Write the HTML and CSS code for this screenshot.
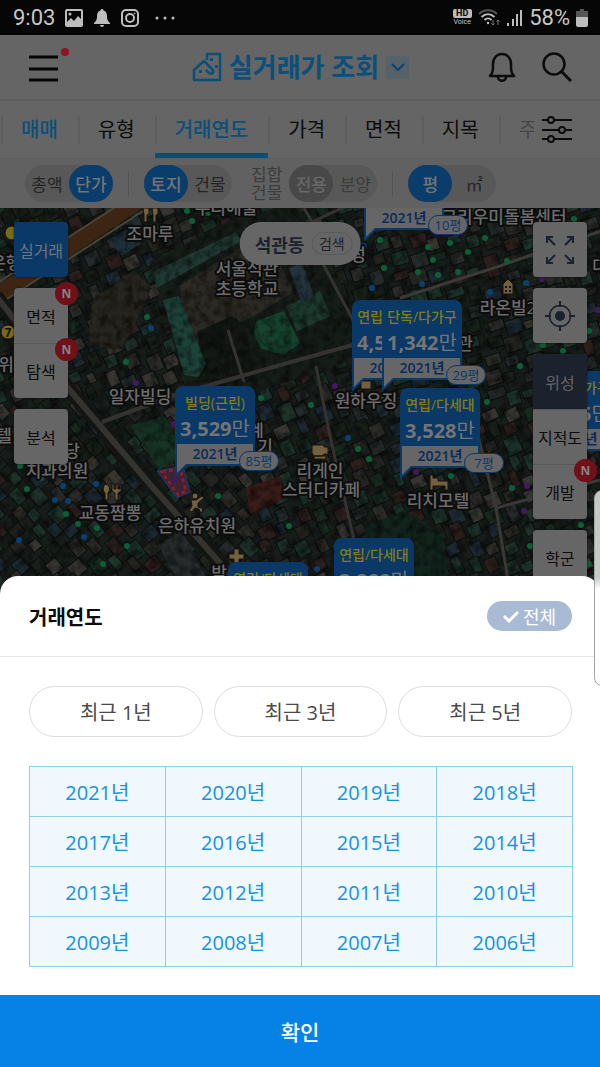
FILE: index.html
```html
<!DOCTYPE html>
<html lang="ko">
<head>
    <meta charset="UTF-8">
    <meta name="viewport" content="width=device-width, initial-scale=1.0">
    <title>실거래가 조회</title>
    <link rel="stylesheet" href="styles.css">
</head>
<body>
    <div class="status">
        <span class="clock">9:03</span>
        <svg width="18" height="18" viewBox="0 0 18 18"><rect x="1" y="1" width="16" height="16" rx="1" fill="none" stroke="#bdbdbd" stroke-width="2"/><path d="M2 13l4-4 3 3 4-5 4 4v6H2z" fill="#bdbdbd"/><circle cx="5" cy="5" r="1.5" fill="#bdbdbd"/></svg>
        <svg width="18" height="18" viewBox="0 0 18 18"><path d="M9 0c1 0 1.500.6 1.500 1.500C13 2.300 14 4.500 14 7c0 4 1 5 3 7v1H1v-1c2-2 3-3 3-7 0-2.500 1-4.700 3.500-5.500C7.500.6 8 0 9 0zM7 16h4c0 1.300-1 2-2 2s-2-.7-2-2z" fill="#bdbdbd"/></svg>
        <svg width="18" height="18" viewBox="0 0 18 18" fill="none" stroke="#bdbdbd" stroke-width="2"><rect x="1" y="1" width="16" height="16" rx="4"/><circle cx="9" cy="9" r="4"/><circle cx="13.500" cy="4.500" r=".5" stroke-width="1"/></svg>
        <svg class="more" width="20" height="4" viewBox="0 0 20 4" fill="#bdbdbd"><circle cx="2" cy="2" r="1.500"/><circle cx="10" cy="2" r="1.500"/><circle cx="18" cy="2" r="1.500"/></svg>
        <div class="status-right">
            <span class="hd"><b>HD</b><small>Voice</small></span>
            <svg width="23" height="18" viewBox="0 0 23 18" fill="none" stroke="#bdbdbd" stroke-width="2"><path d="M1 5c5-5 13-5 18 0" stroke="#555"/><path d="M3.500 8c4-3.600 9-3.600 13 0M6.500 11c2-2 5-2 7 0"/><circle cx="10" cy="14" r="1.200" fill="#bdbdbd" stroke="none"/><path d="M15 11v5m-1.500-1.500L15 16l1.500-1.500M20 16v-5m-1.500 1.500L20 11l1.500 1.500" stroke="#777" stroke-width="1"/></svg>
            <svg width="16" height="18" viewBox="0 0 16 18" fill="#bdbdbd"><path d="M0 14h2v3H0zM5 10h2v7H5zM9 5h2v12H9zM13 1h2v16h-2z"/></svg>
            <span class="clock">58%</span>
            <svg width="12" height="18" viewBox="0 0 12 18"><path d="M4 0h4v2h4v7H0V2h4z" fill="#555"/><path d="M0 8h12v8a2 2 0 0 1-2 2H2a2 2 0 0 1-2-2z" fill="#bdbdbd"/></svg>
        </div>
    </div>

    <header class="topbar">
        <button class="icon-btn menu" aria-label="메뉴">
            <svg width="40" height="38" viewBox="0 0 40 38"><path d="M0 11h29M0 23h29M0 34h29" stroke="#050505" stroke-width="3"/><circle cx="36" cy="6" r="4" fill="#8c1524"/></svg>
        </button>
        <button class="title">
            <svg width="30" height="30" viewBox="0 0 30 30" fill="none" stroke="#0b4f7b" stroke-width="2.500" stroke-linejoin="round"><path d="M15 8V2h13v26H2V18l10-9 8 8c3 3 0 6-3 4l-3-3"/><path d="M7 18h3v3H7zM18 6h3v3h-3zM23 13h3v3h-3z" fill="#0b4f7b" stroke="none"/></svg>
            <h1>실거래가 조회</h1>
            <span class="caret"><svg width="14" height="8" viewBox="0 0 14 8" fill="none" stroke="#0b4472" stroke-width="2"><path d="M1 1l6 6 6-6"/></svg></span>
        </button>
        <div class="actions">
            <button class="icon-btn" aria-label="알림">
                <svg width="28" height="30" viewBox="0 0 28 30" fill="none" stroke="#0c0c0c" stroke-width="2.500"><path d="M2 24c3-3 3-6 3-12 0-6 4-10 9-10s9 4 9 10c0 6 0 9 3 12z" stroke-linejoin="round"/><path d="M10 25c0 5 8 5 8 0"/></svg>
            </button>
            <button class="icon-btn" aria-label="찾기">
                <svg width="30" height="30" viewBox="0 0 30 30" fill="none" stroke="#0c0c0c" stroke-width="3"><circle cx="12" cy="12" r="10.500" stroke-width="2.500"/><path d="M19 19l10 10"/></svg>
            </button>
        </div>
    </header>

    <nav class="tabs">
        <a href="#" class="tab set">매매</a>
        <a href="#" class="tab">유형</a>
        <a href="#" class="tab set current">거래연도</a>
        <a href="#" class="tab">가격</a>
        <a href="#" class="tab">면적</a>
        <a href="#" class="tab">지목</a>
        <a href="#" class="tab cut">주</a>
        <button class="tune" aria-label="필터">
            <svg width="30" height="28" viewBox="0 0 30 28" fill="#656565" stroke="#0c0c0c" stroke-width="2"><path d="M0 4h30M0 14h30M0 23h30"/><circle cx="9" cy="4" r="3"/><circle cx="20" cy="14" r="3"/><circle cx="9" cy="23" r="3"/></svg>
        </button>
    </nav>

    <div class="filters">
        <div class="toggle"><button>총액</button><button class="on">단가</button></div>
        <i class="bar"></i>
        <div class="toggle"><button class="on">토지</button><button>건물</button></div>
        <span class="note">집합<br>건물</span>
        <div class="toggle off"><button class="on">전용</button><button>분양</button></div>
        <i class="bar"></i>
        <div class="toggle"><button class="on">평</button><button>㎡</button></div>
    </div>

    <main class="map">
        <svg class="aerial" viewBox="0 208 600 384" preserveAspectRatio="xMidYMin slice">
            <defs>
                <filter id="grain" x="0" y="0" width="100%" height="100%">
                    <feTurbulence type="fractalNoise" baseFrequency="0.120" numOctaves="3" seed="4"/>
                    <feColorMatrix values="0 0 0 0 0  0 0 0 0 0  0 0 0 0 0  2.400 0 0 0 -0.900"/>
                </filter>
            </defs>
            <rect y="208" width="600" height="384" fill="#171d1a"/>
            <g id="houses"></g>
            <!-- school -->
            <path d="M150 262l86-44 60-14 30 46 30 70-6 40-100 34-60 6z" fill="#161d19"/>
            <path d="M180 285l60-37 36 8 18 36-44 26-52 24-14-4z" fill="#2c2a24"/>
            <path d="M197 332l34-16 14 8 10 56-46 8z" fill="#131814"/>
            <path d="M92 300l42-30 18 18-30 62-34-4z" fill="#26251f"/>
            <path d="M151 273l85-41 5 9-84 47z" fill="#203a33"/>
            <path d="M163 300l16-4 27 68-8 13-14-2z" fill="#1d4238"/>
            <path d="M256 321l28-10 16 32-16 12-22-6-8-14z" fill="#16432e"/>
            <path d="M286 306l34-15 11 25-34 15z" fill="#1d3a2e"/>
            <path d="M289 268l13-4 13 34-14 5z" fill="#24353b"/>
            <path d="M108 240l30-18 12 14-28 20z" fill="#1d2f38"/>
            <path d="M130 425l35-9 20 40-26 14z" fill="#173325"/>
            <path d="M246 488l34-12 6 22-36 16z" fill="#3a1c1b"/>
            <path d="M158 545l24-14 24 46-24 12z" fill="#272b2c"/>
            <path d="M366 526l40-16 38 26 6 56h-90z" fill="#13241d"/>
            <rect y="208" width="600" height="384" filter="url(#grain)" opacity=".5"/>
            <!-- roads -->
            <g fill="none" stroke="#34332f">
                <path d="M-4 296L140 200" stroke="#3c2513" stroke-width="16"/>
                <path d="M-4 284L120 204M-4 306L160 200" stroke="#4a4438" stroke-width="2"/>
                <path d="M-4 296L68 388l80 94 80 90" stroke="#121513" stroke-width="14"/>
                <path d="M-4 296L68 388l80 94 80 90" stroke-width="6"/>
                <path d="M102 422l76-28 120-34 80-22 80-25" stroke-width="4"/>
                <path d="M400 298l100-32 40-14 70-24" stroke="#3c3a38" stroke-width="3"/>
                <path d="M316 366l14 70 24 104" stroke-width="3"/>
                <path d="M322 262l32 60" stroke-width="3"/>
                <path d="M228 330l16 52M304 208l8 14 60-28" stroke-width="3"/>
                <path d="M478 436l18 72 14 84M496 508l104-28" stroke="#3a3836" stroke-width="3"/>
            </g>
            <path d="M157 471l26-5 7 26-13 6z" fill="#3a2438" stroke="#0b4472"/>
            <path d="M162 472l18-3 6 22-8 4z" fill="none" stroke="#961824" stroke-width="3" stroke-dasharray="4 3"/>
            <g id="dots"></g>
            <g fill="#73603d" stroke="#161310">
                <path d="M143 208h6v6l-2 1v7h-3v-7zM152 208h6v6l-2 1v7h-3v-7z"/>
                <path d="M106 484a4 5 0 0 1 2 9v7h-3v-7a4 5 0 0 1 1-9zM112 484h2v5h2v-5h2v5h2v-5h1v7l-3 2v7h-3v-7l-3-2z"/>
                <circle cx="195" cy="496" r="3"/><path d="M191 500h5l6-4 2 2-6 5v4l4 1 1 4h-3l-1-3-4-1-3 4-3-1 3-5z"/>
                <path d="M312 445h12v2h4v7h-4l-2 2h-8l-2-3zM314 456h12v3h-12z"/>
                <path d="M430 475h3v3h5v3h10v9h-3v-4h-12v4h-3z"/>
                <path d="M234 549h5v5h5v5h-5v5h-5v-5h-5v-5h5z"/>
                <path d="M503 284l5-5 5 5v10h-10z"/><path d="M361 381h10v8h-10z"/>
                <path d="M505 286h2v2h-2zM509 286h2v2h-2zM505 290h2v2h-2zM509 290h2v2h-2z" fill="#161310" stroke="none"/>
                <circle cx="8" cy="332" r="7" fill="#7a6a18"/>
                <circle cx="12" cy="233" r="7" fill="#7a6a18"/>
            </g>
            <g class="places">
                <text x="150" y="240">조마루</text>
                <text x="226" y="214">우리애물</text>
                <text x="247" y="275">서울석관</text>
                <text x="247" y="295">초등학교</text>
                <text x="140" y="403">일자빌딩</text>
                <text x="504" y="223">그리우미돌봄센터</text>
                <text x="508" y="314">라온빌2</text>
                <text x="465" y="350">관</text>
                <text x="366" y="407">원하우징</text>
                <text x="358" y="261">성</text>
                <text x="600" y="272">대</text>
                <text x="6" y="269">은행</text>
                <text x="6" y="371">위</text>
                <text x="4" y="442">텔</text>
                <text x="72" y="457">당</text>
                <text x="57" y="477">치과의원</text>
                <text x="110" y="519">교동짬뽕</text>
                <text x="197" y="532">은하유치원</text>
                <text x="256" y="437">계</text>
                <text x="265" y="453">기</text>
                <text x="320" y="477">리게인</text>
                <text x="321" y="496">스터디카페</text>
                <text x="438" y="507">리치모텔</text>
                <text x="219" y="579">박</text>
                <text x="8" y="337" class="route">7</text>
            </g>
        </svg>

        <div class="pin pin-a"><em>단독/다가구</em><strong>1,250<i>만</i></strong><span class="year">2021년</span><span class="area">10평</span></div>
        <div class="pin pin-b"><em>빌딩(근린)</em><strong>3,529<i>만</i></strong><span class="year">2021년</span><span class="area">85평</span></div>
        <div class="pin pin-c"><em>연립/다세대</em><strong>4,512<i>만</i></strong><span class="year">2021년</span></div>
        <div class="pin pin-d"><em>단독/다가구</em><strong>1,342<i>만</i></strong><span class="year">2021년</span><span class="area">29평</span></div>
        <div class="pin pin-e"><em>연립/다세대</em><strong>3,528<i>만</i></strong><span class="year">2021년</span><span class="area">7평</span></div>
        <div class="pin pin-f"><em>연립/다세대</em><strong>3,288<i>만</i></strong></div>
        <div class="pin pin-g"><em>연립/다세대</em></div>
        <div class="pin pin-h"><em>단독/다가구</em><strong>1,245<i>만</i></strong><span class="year">2021년</span></div>

        <div class="place"><b>석관동</b><button>검색</button></div>

        <div class="side left">
            <div class="stack blue"><button>실거래</button></div>
            <div class="stack">
                <button>면적<span class="new">N</span></button>
                <button>탐색<span class="new">N</span></button>
            </div>
            <div class="stack"><button>분석</button></div>
        </div>
        <div class="side right">
            <div class="stack"><button aria-label="전체 화면">
                <svg width="28" height="28" viewBox="0 0 28 28" fill="none" stroke="#1b222d" stroke-width="2"><path d="M9 9L1 1m0 6V1h6M19 9l8-8m-6 0h6v6M9 19l-8 8m0-6v6h6M19 19l8 8m0-6v6h-6"/></svg>
            </button></div>
            <div class="stack"><button aria-label="현재 위치">
                <svg width="30" height="30" viewBox="0 0 30 30" fill="none" stroke="#1b222d" stroke-width="2"><circle cx="15" cy="15" r="10.500" stroke-width="1.500"/><circle cx="15" cy="15" r="5" fill="#1b222d" stroke="none"/><path d="M15 0v6M15 24v6M0 15h6M24 15h6"/></svg>
            </button></div>
            <div class="stack">
                <button class="dark">위성</button>
                <button>지적도</button>
                <button>개발<span class="new">N</span></button>
            </div>
            <div class="stack"><button>학군</button></div>
        </div>
    </main>

    <section class="sheet">
        <div class="sheet-head">
            <h2>거래연도</h2>
            <button class="all"><svg width="16" height="13" viewBox="0 0 16 13" fill="none" stroke="#fff" stroke-width="3"><path d="M1 6l5 5 9-9"/></svg>전체</button>
        </div>
        <div class="recent">
            <button>최근 1년</button>
            <button>최근 3년</button>
            <button>최근 5년</button>
        </div>
        <div class="years">
            <button>2021년</button>
            <button>2020년</button>
            <button>2019년</button>
            <button>2018년</button>
            <button>2017년</button>
            <button>2016년</button>
            <button>2015년</button>
            <button>2014년</button>
            <button>2013년</button>
            <button>2012년</button>
            <button>2011년</button>
            <button>2010년</button>
            <button>2009년</button>
            <button>2008년</button>
            <button>2007년</button>
            <button>2006년</button>
        </div>
        <button class="confirm">확인</button>
    </section>
    <div class="edge-handle"></div>

    <script src="map.js"></script>
</body>
</html>
```
FILE: styles.css
```css
* {
    box-sizing: border-box;
}

body {
    position: relative;
    display: flex;
    flex-direction: column;
    min-height: 100vh;
    margin: 0;
    overflow-x: hidden;
    background-color: #656565;
    font-family: "Open Sans", "Noto Sans CJK KR", sans-serif;
    color: #0c0c0c;
}

button {
    padding: 0;
    border: 0;
    background: none;
    color: inherit;
    font: inherit;
    cursor: pointer;
}

svg {
    display: block;
    flex: none;
}

/* status bar */
.status {
    display: flex;
    align-items: center;
    gap: 10px;
    height: 35px;
    padding: 0 12px 0 13px;
    background-color: #060606;
    color: #c6c6c6;
    font-family: Roboto, sans-serif;
}

.clock {
    font-size: 22px;
}

.more {
    margin-left: 6px;
}

.status-right {
    display: flex;
    align-items: center;
    gap: 6px;
    margin-left: auto;
}

.hd {
    display: flex;
    flex-direction: column;
    align-items: center;
    width: 20px;
    line-height: 8px;
}

.hd b {
    width: 19px;
    border-radius: 2px;
    background-color: #bdbdbd;
    color: #060606;
    font-size: 9px;
    line-height: 9px;
    text-align: center;
}

.hd small {
    font-size: 7px;
}

/* header */
.topbar {
    display: grid;
    grid-template-columns: 1fr auto 1fr;
    align-items: center;
    height: 66px;
    padding: 0 28px 0 29px;
    border-bottom: 2px solid #5d5d5d;
}

.menu {
    justify-self: start;
    padding-bottom: 4px;
}

.actions {
    display: flex;
    gap: 26px;
    justify-self: end;
}

.title {
    display: flex;
    align-items: center;
    gap: 7px;
    color: #0b4f7b;
}

.title h1 {
    margin: 0;
    font-size: 26px;
    font-weight: 700;
    line-height: 36px;
}

.caret {
    display: grid;
    place-items: center;
    width: 23px;
    height: 23px;
    border-radius: 3px;
    background-color: #56626a;
}

/* tabs */
.tabs {
    position: relative;
    display: flex;
    height: 58px;
    padding-left: 1px;
    border-bottom: 1px solid #5d5d5d;
    overflow: hidden;
}

.tab {
    position: relative;
    flex: none;
    padding: 0 20px;
    color: #0c0c0c;
    font-size: 20px;
    line-height: 58px;
    text-decoration: none;
}

.tab::before {
    content: "";
    position: absolute;
    top: 15px;
    left: 0;
    width: 2px;
    height: 28px;
    background-color: #5d5d5d;
}

.set {
    color: #0b4f7b;
    font-weight: 500;
}

.current {
    border-bottom: 5px solid #064f78;
}

.cut {
    color: #454545;
}

.tune {
    position: absolute;
    top: 0;
    right: 0;
    width: 66px;
    height: 57px;
    padding-left: 8px;
    background-color: #656565;
}

/* filters */
.filters {
    display: flex;
    align-items: center;
    gap: 15px;
    height: 49px;
    padding: 0 25px;
    background-color: #616161;
}

.toggle {
    display: flex;
    border-radius: 19px;
    background-color: #585858;
    color: #262626;
    font-size: 17px;
}

.toggle button {
    width: 44px;
    height: 37px;
}

.toggle .on {
    border-radius: 19px;
    background-color: #0a3c6c;
    color: #747474;
    font-weight: 500;
}

.toggle.off {
    margin-left: -8px;
    color: #3c3c3c;
}

.off .on {
    background-color: #484848;
    color: #686868;
}

.bar {
    width: 1px;
    height: 26px;
    background-color: #555;
}

.note {
    margin-left: 4px;
    color: #3c3c3c;
    font-size: 17px;
    line-height: 18px;
}

/* map */
.map {
    position: relative;
    flex: 1;
    min-height: 384px;
    overflow: hidden;
    background-color: #171d1a;
}

.aerial {
    position: absolute;
    inset: 0;
    width: 100%;
    height: 100%;
}

.places text {
    fill: #6c6c6c;
    stroke: #0c0c0c;
    stroke-width: 4px;
    stroke-linejoin: round;
    paint-order: stroke;
    font-size: 17px;
    font-weight: 500;
    text-anchor: middle;
}

.places .route {
    fill: #111;
    stroke: none;
    font-size: 12px;
    font-weight: 700;
}

.pin {
    position: absolute;
    display: flex;
    flex-direction: column;
    align-items: center;
    width: 80px;
    padding-top: 6px;
    border-radius: 8px 8px 0 0;
    background-color: #0a3867;
    color: #747474;
}

.pin em {
    color: #827f10;
    font-size: 14px;
    font-style: normal;
    font-weight: 500;
    line-height: 22px;
    white-space: nowrap;
}

.pin strong {
    font-size: 20px;
    line-height: 30px;
}

.pin strong i {
    font-style: normal;
    font-weight: 400;
}

.year {
    position: relative;
    width: 80px;
    height: 22px;
    border: 2px solid #0a3867;
    border-top: 0;
    background-color: #666;
    color: #092c5c;
    font-size: 14px;
    font-weight: 600;
    line-height: 20px;
    text-align: center;
}

/* flag tail */
.year::before,
.year::after {
    content: "";
    position: absolute;
    top: 20px;
    left: -2px;
    width: 14px;
    height: 14px;
    background-color: #0a3867;
    clip-path: polygon(0 0, 100% 0, 0 100%);
}

.year::after {
    top: 19px;
    left: 0;
    width: 10px;
    height: 10px;
    background-color: #666;
}

.area {
    position: absolute;
    top: 65px;
    left: 64px;
    width: 40px;
    height: 20px;
    border: 1px solid #0a3867;
    border-radius: 10px;
    background-color: #666;
    color: #0a3867;
    font-size: 13px;
    line-height: 18px;
    text-align: center;
}

.pin-a { left: 364px; top: -58px; }
.pin-b { left: 175px; top: 178px; }
.pin-c { left: 352px; top: 92px; }
.pin-d { left: 382px; top: 92px; }
.pin-e { left: 400px; top: 180px; }
.pin-f { left: 334px; top: 330px; }
.pin-g { left: 228px; top: 354px; }
.pin-h { left: 535px; top: 163px; }

.place {
    position: absolute;
    top: 14px;
    left: 50%;
    display: flex;
    align-items: center;
    gap: 7px;
    height: 43px;
    padding: 0 8px 0 15px;
    border-radius: 22px;
    background-color: #666;
    color: #1b222d;
    font-size: 18px;
    transform: translateX(-50%);
}

.place button {
    width: 41px;
    height: 23px;
    border: 1px solid #595959;
    border-radius: 12px;
    font-size: 14px;
    line-height: 20px;
}

.side {
    position: absolute;
    top: 14px;
    display: flex;
    flex-direction: column;
    gap: 11px;
}

.left {
    left: 14px;
}

.right {
    right: 13px;
}

.stack {
    display: flex;
    flex-direction: column;
    border-radius: 4px;
    background-color: #666;
    box-shadow: 0 0 2px #111;
}

.stack button {
    position: relative;
    display: grid;
    place-items: center;
    width: 54px;
    height: 55px;
    font-size: 16px;
}

.stack button + button {
    border-top: 1px solid #595959;
}

.blue {
    background-color: #0a3867;
    color: #757575;
}

.stack .dark {
    border-radius: 4px 4px 0 0;
    background-color: #1b222d;
    color: #666;
}

.new {
    position: absolute;
    top: -6px;
    right: -10px;
    width: 23px;
    height: 23px;
    border-radius: 50%;
    background-color: #701019;
    color: #858585;
    font-size: 12px;
    font-weight: 700;
    line-height: 23px;
    text-align: center;
}

/* bottom sheet */
.sheet {
    position: relative;
    margin-top: -16px;
    border-radius: 18px 18px 0 0;
    background-color: #fff;
}

.sheet-head {
    display: flex;
    align-items: center;
    justify-content: space-between;
    height: 81px;
    padding: 0 28px 0 29px;
    border-bottom: 1px solid #e8e8e8;
}

.sheet-head h2 {
    margin: 0;
    font-size: 20px;
    font-weight: 700;
}

.all {
    display: flex;
    align-items: center;
    justify-content: center;
    gap: 4px;
    width: 85px;
    height: 30px;
    border-radius: 15px;
    background-color: #a9bbd4;
    color: #fff;
    font-size: 18px;
}

.recent {
    display: grid;
    grid-template-columns: repeat(3, 1fr);
    gap: 11px;
    padding: 29px 28px 29px 29px;
}

.recent button {
    height: 51px;
    border: 1px solid #ddd;
    border-radius: 26px;
    color: #4a4a4a;
    font-size: 20px;
}

.years {
    display: grid;
    grid-template-columns: repeat(4, 1fr);
    gap: 1px;
    margin: 0 27px 28px 29px;
    border: 1px solid #8fcdec;
    background-color: #8fcdec;
}

.years button {
    height: 49px;
    background-color: #f0f8fe;
    color: #1592e0;
    font-size: 20px;
}

.confirm {
    display: block;
    width: 100%;
    height: 72px;
    background-color: #0682e6;
    color: #fff;
    font-size: 21px;
    font-weight: 500;
}

.edge-handle {
    position: absolute;
    top: 490px;
    right: -10px;
    width: 16px;
    height: 196px;
    border: 1px solid #a5a5a5;
    border-radius: 8px;
    background: linear-gradient(#c4c9c6 0, #c4c9c6 86px, #fff 98px);
}
```
FILE: map.js
```js
const NS = 'http://www.w3.org/2000/svg';
const houses = document.getElementById('houses');
const dots = document.getElementById('dots');

let seed = 17;
function rand() {
    seed = (seed * 16807) % 2147483647;
    return seed / 2147483647;
}

const roofs = ['#1c3029', '#182a20', '#1f332b', '#2c2c2a', '#363531', '#252b2b', '#2c201e', '#1d2830', '#22241f', '#182019', '#2a2a27'];

// rows of roofs, turned to follow the streets
for (let y = 200; y < 600; y += 17) {
    for (let x = -10; x < 610; x += 19) {
        const w = 10 + rand() * 8;
        const h = 8 + rand() * 8;
        const px = x + rand() * 5;
        const py = y + rand() * 4;
        const turn = x > 330 && y < 390 ? -18 : x < 240 && y > 390 ? 50 : 65;
        const fill = roofs[Math.floor(rand() * roofs.length)];
        const rect = document.createElementNS(NS, 'rect');
        rect.setAttribute('x', px);
        rect.setAttribute('y', py);
        rect.setAttribute('width', w);
        rect.setAttribute('height', h);
        rect.setAttribute('fill', fill);
        rect.setAttribute('stroke', '#0d110f');
        rect.setAttribute('transform', `rotate(${turn} ${px + w / 2} ${py + h / 2})`);
        houses.appendChild(rect);
    }
}

const deals = {
    '#0d5e38': [[187, 211], [192, 221], [147, 317], [126, 362], [208, 213], [380, 240], [384, 268], [428, 247], [450, 243], [433, 260], [468, 252], [418, 272], [438, 275], [458, 272], [485, 238], [507, 261], [475, 212], [496, 212], [506, 222], [522, 218], [574, 219], [589, 331], [543, 345], [520, 366], [563, 351], [3, 442], [20, 466], [41, 478], [85, 465], [27, 489], [66, 514], [78, 524], [97, 528], [127, 546], [103, 564], [261, 398], [311, 405], [257, 433], [218, 496], [289, 526], [358, 449], [369, 459], [381, 397], [391, 406], [487, 402], [451, 476], [512, 488], [581, 525], [530, 546], [588, 564]],
    '#0b3f70': [[151, 328], [372, 288], [364, 246], [422, 284], [490, 292], [526, 283], [63, 486], [96, 484], [55, 500], [68, 501], [84, 537], [120, 520], [19, 540], [348, 438], [352, 395], [317, 569]],
    '#43185f': [[136, 383], [542, 279], [598, 310], [335, 386], [174, 424], [317, 449], [416, 472], [527, 486], [524, 511], [175, 480]]
};

for (const color in deals) {
    deals[color].forEach(([x, y]) => {
        const c = document.createElementNS(NS, 'circle');
        c.setAttribute('cx', x);
        c.setAttribute('cy', y);
        c.setAttribute('r', 3);
        c.setAttribute('fill', color);
        dots.appendChild(c);
    });
}
```
